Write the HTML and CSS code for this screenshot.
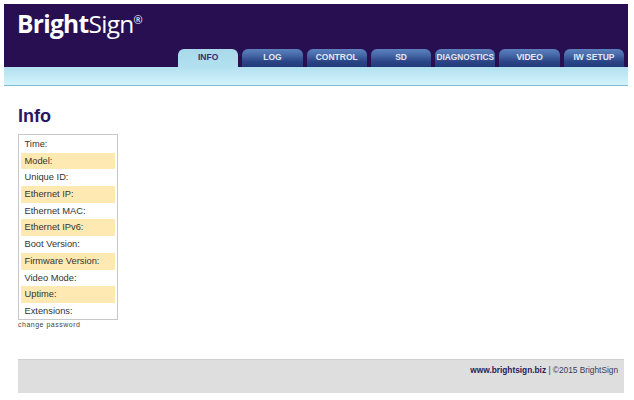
FILE: index.html
```html
<!DOCTYPE html>
<html lang="en">
<head>
    <meta charset="UTF-8">
    <title>BrightSign</title>
    <link rel="stylesheet" href="styles.css">
</head>
<body>
    <div class="page">
        <!-- Header with logo and tabs -->
        <header class="header">
            <div class="logo"><strong>Bright</strong>Sign<sup>®</sup></div>
            <nav class="tabs">
                <a class="tab active">INFO</a>
                <a class="tab">LOG</a>
                <a class="tab">CONTROL</a>
                <a class="tab">SD</a>
                <a class="tab tight">DIAGNOSTICS</a>
                <a class="tab">VIDEO</a>
                <a class="tab">IW SETUP</a>
            </nav>
        </header>
        <div class="strip"></div>

        <!-- Main content -->
        <main class="content">
            <h1>Info</h1>
            <div class="info-box">
                <div class="row">Time:</div>
                <div class="row alt">Model:</div>
                <div class="row">Unique ID:</div>
                <div class="row alt">Ethernet IP:</div>
                <div class="row">Ethernet MAC:</div>
                <div class="row alt">Ethernet IPv6:</div>
                <div class="row">Boot Version:</div>
                <div class="row alt">Firmware Version:</div>
                <div class="row">Video Mode:</div>
                <div class="row alt">Uptime:</div>
                <div class="row">Extensions:</div>
            </div>
            <a class="change-password">change password</a>
        </main>

        <footer class="footer">
            <strong>www.brightsign.biz</strong> | ©2015 BrightSign
        </footer>
    </div>
</body>
</html>
```

FILE: styles.css
```css
body {
    margin: 0;
    background-color: #ffffff;
    font-family: "Liberation Sans", Arial, sans-serif;
    color: #333;
}
.page {
    width: 624px;
    margin: 4px 0 0 4px;
}
.header {
    height: 63px;
    background-color: #280f52;
    display: flex;
    flex-direction: column;
    justify-content: space-between;
}
.logo {
    padding: 5px 0 0 13px;
    font-family: "Open Sans", sans-serif;
    font-size: 24.5px;
    line-height: 30px;
    letter-spacing: -0.7px;
    color: #ffffff;
}
.logo strong {
    font-weight: 700;
}
.logo sup {
    font-size: 11px;
    line-height: 0;
    vertical-align: 9px;
}
.tabs {
    display: flex;
    gap: 4px;
    padding-left: 174px;
}
.tab {
    width: 60.3px;
    height: 18px;
    border-radius: 6px 6px 0 0;
    background: linear-gradient(to bottom, #5b80bd 0%, #4a6cab 30%, #2a4486 70%, #223a78 100%);
    color: #e4e8f2;
    font-size: 8.5px;
    font-weight: bold;
    line-height: 17px;
    text-align: center;
    white-space: nowrap;
}
.tab.active {
    background: linear-gradient(to bottom, #a9d9e9, #b2e0ef);
    color: #3a2a6c;
}
.tab.tight {
    font-size: 8.3px;
}
.strip {
    height: 18px;
    background: linear-gradient(to bottom, #b2e0ef, #d3f3fb);
    border-bottom: 1px solid #7fb9d6;
}
.content {
    padding: 20px 0 0 14px;
}
h1 {
    margin: 0 0 8px;
    font-size: 18px;
    line-height: 20px;
    color: #2a1465;
}
.info-box {
    box-sizing: border-box;
    width: 100px;
    height: 186px;
    padding: 1px 2px;
    border: 1px solid #c8c8c8;
}
.row {
    height: 16.7px;
    padding-left: 3.5px;
    font-size: 9.3px;
    line-height: 16px;
}
.row.alt {
    background-color: #ffe9b3;
}
.change-password {
    display: block;
    margin-top: 0;
    font-size: 7px;
    line-height: 9px;
    letter-spacing: 0.5px;
    color: #444;
}
.footer {
    box-sizing: border-box;
    height: 34px;
    margin: 30px 4px 0 14px;
    padding: 5px 6px 0 0;
    background-color: #dedede;
    border-top: 1px solid #cfcfcf;
    text-align: right;
    font-size: 8.3px;
    line-height: 11px;
    color: #3a3a5a;
}
.footer strong {
    color: #2a1a55;
}
```
